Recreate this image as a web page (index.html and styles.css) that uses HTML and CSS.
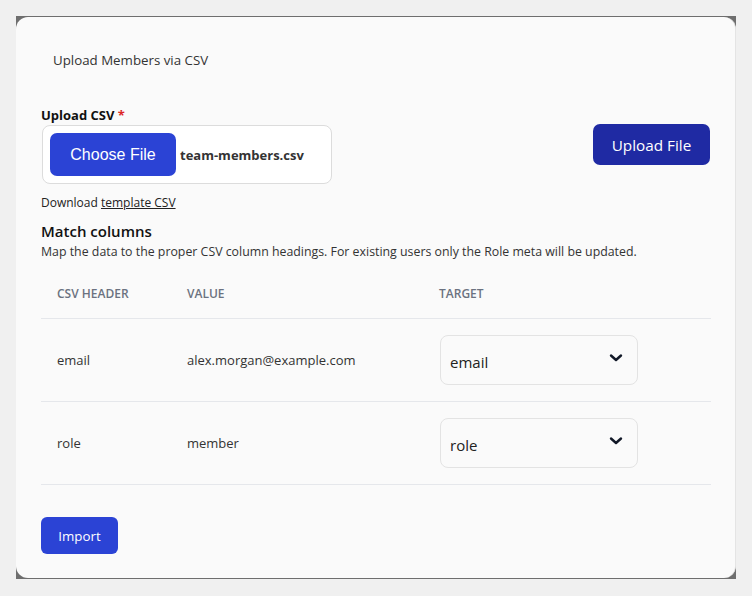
FILE: index.html
```html
<!DOCTYPE html>
<html>
<head>
<meta charset="utf-8">
<link rel="stylesheet" href="styles.css">
</head>
<body>
<div class="backdrop">
  <div class="card">
    <h1 class="title">Upload Members via CSV</h1>
    <div class="upload-row">
      <div class="upload-left">
        <label class="label">Upload CSV <span class="req">*</span></label>
        <div class="file-box">
          <span class="choose">Choose File</span>
          <span class="file-name">team-members.csv</span>
        </div>
        <p class="download">Download <a href="#" class="link">template CSV</a></p>
      </div>
      <button class="upload-btn">Upload File</button>
    </div>
    <h2 class="section">Match columns</h2>
    <p class="desc">Map the data to the proper CSV column headings. For existing users only the Role meta will be updated.</p>
    <table class="map">
      <thead>
        <tr><th class="c1">CSV HEADER</th><th class="c2">VALUE</th><th class="c3">TARGET</th></tr>
      </thead>
      <tbody>
        <tr>
          <td>email</td><td>alex.morgan@example.com</td>
          <td><div class="select"><span>email</span><svg width="14" height="10" viewBox="0 0 14 10"><path d="M2 2.5l5 4.5 5-4.5" fill="none" stroke="#111827" stroke-width="2.4" stroke-linecap="round" stroke-linejoin="round"/></svg></div></td>
        </tr>
        <tr>
          <td>role</td><td>member</td>
          <td><div class="select"><span>role</span><svg width="14" height="10" viewBox="0 0 14 10"><path d="M2 2.5l5 4.5 5-4.5" fill="none" stroke="#111827" stroke-width="2.4" stroke-linecap="round" stroke-linejoin="round"/></svg></div></td>
        </tr>
      </tbody>
    </table>
    <button class="import-btn">Import</button>
  </div>
</div>
</body>
</html>
```

FILE: styles.css
```css
html, body { margin: 0; padding: 0; }
body {
  background: #f0f0f0;
  padding: 16px;
  font-family: "Open Sans", "Noto Sans", sans-serif;
  color: #1f2937;
}
.backdrop {
  width: 720px;
  height: 563px;
  background: #6e6e6e;
  padding-top: 1px;
  box-sizing: border-box;
}
.card {
  height: 561px;
  background: #fafafa;
  border-radius: 12px;
  border-right: 1px solid #e4e4e4;
  box-sizing: border-box;
  padding: 0 25px 0 25px;
}
.title {
  margin: 0;
  padding: 34px 0 0 12px;
  font-size: 13.3px;
  font-weight: 400;
  line-height: 18px;
  color: #333;
}
.upload-row {
  display: flex;
  justify-content: space-between;
  align-items: flex-start;
  margin-top: 37px;
}
.label {
  display: block;
  font-size: 13px;
  font-weight: 700;
  line-height: 18px;
  color: #111;
}
.req { color: #dc2626; }
.file-box {
  margin-top: 1px;
  margin-left: 1px;
  width: 290px;
  height: 59px;
  box-sizing: border-box;
  border: 1px solid #dcdcdc;
  border-radius: 8px;
  background: #fff;
  display: flex;
  align-items: center;
  padding-left: 7px;
  gap: 4px;
}
.choose {
  width: 126px;
  height: 43px;
  background: #2b43d5;
  border-radius: 7px;
  color: #fff;
  font-family: "Liberation Sans", Arial, sans-serif;
  font-size: 16px;
  display: flex;
  align-items: center;
  justify-content: center;
}
.file-name {
  font-size: 13px;
  font-weight: 700;
  color: #333;
}
.download {
  margin: 11px 0 0;
  font-size: 12px;
  line-height: 16px;
  color: #222;
}
.link { color: #222; text-decoration: underline; }
.upload-btn {
  margin-top: 18px;
  width: 117px;
  height: 41px;
  border: none;
  border-radius: 7px;
  background: #1f2aa3;
  color: #fff;
  font-family: "Open Sans", sans-serif;
  font-size: 15.3px;
  margin-right: 0;
}
.section {
  margin: 10px 0 0;
  font-size: 15px;
  font-weight: 600;
  line-height: 20px;
  color: #111;
}
.desc {
  margin: 3px 0 0;
  font-size: 12.35px;
  line-height: 16px;
  color: #333;
}
.map {
  width: 670px;
  border-collapse: collapse;
  margin-top: 9px;
  font-size: 13px;
}
.map th {
  text-align: left;
  font-size: 12px;
  font-weight: 600;
  color: #6b7280;
  height: 49px;
  padding: 0 16px;
  border-bottom: 1px solid #e5e7eb;
}
.map th.c1 { width: 98px; }
.map th.c2 { width: 220px; }
.map td {
  height: 82px;
  padding: 0 16px;
  border-bottom: 1px solid #e5e7eb;
  color: #333;
}
.map td:last-child { padding-left: 17px; }
.select {
  width: 198px;
  height: 50px;
  box-sizing: border-box;
  border: 1px solid #e3e3e3;
  border-radius: 8px;
  display: flex;
  align-items: center;
  justify-content: space-between;
  padding: 0 14px 0 9px;
  font-size: 15px;
  color: #222;
}
.select span { padding-top: 4px; }
.select svg { margin-top: -4px; }
.import-btn {
  margin-top: 32px;
  width: 77px;
  height: 37px;
  border: none;
  border-radius: 6px;
  background: #2b43d5;
  color: #fff;
  font-family: "Open Sans", sans-serif;
  font-size: 13.3px;
}
```
